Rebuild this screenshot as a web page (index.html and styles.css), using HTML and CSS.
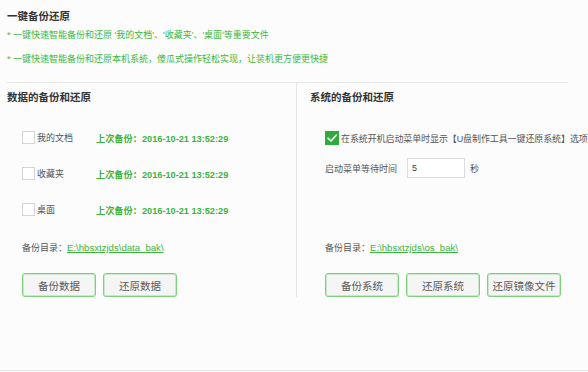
FILE: index.html
```html
<!DOCTYPE html>
<html lang="zh-CN">
<head>
<meta charset="utf-8">
<title>一键备份还原</title>
<link rel="stylesheet" href="styles.css">
</head>
<body>
<div class="page">
  <div class="wrap">
    <h1 class="title">一键备份还原</h1>
    <p class="tip tip1">* 一键快速智能备份和还原 '我的文档'、'收藏夹'、'桌面'等重要文件</p>
    <p class="tip tip2">* 一键快速智能备份和还原本机系统，傻瓜式操作轻松实现，让装机更方便更快捷</p>
    <div class="panels">
      <section class="panel panel-left">
        <h2 class="sub">数据的备份和还原</h2>
        <div class="rows">
          <div class="row"><span class="item"><span class="cb"></span><span class="lbl">我的文档</span></span><span class="date">上次备份：2016-10-21 13:52:29</span></div>
          <div class="row"><span class="item"><span class="cb"></span><span class="lbl">收藏夹</span></span><span class="date">上次备份：2016-10-21 13:52:29</span></div>
          <div class="row"><span class="item"><span class="cb"></span><span class="lbl">桌面</span></span><span class="date">上次备份：2016-10-21 13:52:29</span></div>
        </div>
        <div class="path path-left">备份目录：<a class="link">E:\hbsxtzjds\data_bak\</a></div>
        <div class="btns">
          <button class="btn">备份数据</button>
          <button class="btn">还原数据</button>
        </div>
      </section>
      <section class="panel panel-right">
        <h2 class="sub">系统的备份和还原</h2>
        <div class="opt"><span class="cb cb-on"><svg viewBox="0 0 14 14" width="14" height="14"><path d="M3 7.2 L6 10 L11.2 4.2" fill="none" stroke="#fff" stroke-width="1.6" stroke-linecap="round" stroke-linejoin="round"/></svg></span><span class="opt-text">在系统开机启动菜单时显示【U盘制作工具一键还原系统】选项</span></div>
        <div class="wait"><span>启动菜单等待时间</span><span class="input">5</span><span>秒</span></div>
        <div class="path path-right">备份目录：<a class="link">E:\hbsxtzjds\os_bak\</a></div>
        <div class="btns">
          <button class="btn">备份系统</button>
          <button class="btn">还原系统</button>
          <button class="btn">还原镜像文件</button>
        </div>
      </section>
    </div>
  </div>
</div>
</body>
</html>
```
FILE: styles.css
```css
* { box-sizing: border-box; }
html, body { margin: 0; padding: 0; }
body {
  background: #fcfcfc;
  font-family: "Liberation Sans", "Noto Sans CJK SC", sans-serif;
  color: #555;
  font-size: 9px;
}
.page {
  height: 371px;
  border-bottom: 1px solid #e6e6e6;
  overflow: hidden;
}
.wrap {
  padding-left: 7px;
  width: 568px;
}
.title {
  margin: 9px 0 0;
  font-size: 10.5px;
  line-height: 14px;
  font-weight: bold;
  color: #333;
}
.tip {
  margin: 0;
  line-height: 14px;
  color: #3cb83c;
  white-space: nowrap;
}
.tip1 { margin-top: 5px; }
.tip2 { margin-top: 10px; }
.panels {
  margin-top: 16px;
  border-top: 1px solid #e6e6e6;
  display: grid;
  grid-template-columns: 290px 271px;
  height: 210px;
}
.panel-left {
  border-right: 1px solid #e6e6e6;
}
.panel-right {
  padding-left: 13px;
}
.sub {
  margin: 7px 0 0;
  font-size: 10.5px;
  line-height: 14px;
  font-weight: bold;
  color: #333;
}
.rows {
  margin-top: 15.5px;
  padding-left: 15px;
}
.row {
  height: 36px;
  display: flex;
  align-items: center;
}
.item {
  width: 74px;
  display: flex;
  align-items: center;
}
.cb {
  width: 13px;
  height: 13px;
  border: 1px solid #d4d4d4;
  background: #fff;
  display: inline-block;
  flex: none;
}
.lbl { margin-left: 2px; color: #555; }
.date {
  color: #3cb43c;
  font-weight: bold;
  font-size: 9.2px;
}
.path {
  line-height: 14px;
  white-space: nowrap;
  color: #555;
}
.path-left { margin-top: 13.5px; padding-left: 15px; }
.path-right { margin-top: 63px; padding-left: 15px; }
.link {
  color: #3cb43c;
  text-decoration: underline;
  font-size: 9.6px;
}
.btns {
  margin-top: 18px;
  padding-left: 15px;
  display: flex;
  gap: 7px;
}
.btn {
  width: 74px;
  height: 24px;
  border: 1px solid #7ecf7e;
  border-radius: 3px;
  background: #f5f5f5;
  color: #5a5a5a;
  font-family: "Liberation Sans", "Noto Sans CJK SC", sans-serif;
  font-size: 10.5px;
  padding: 0;
  box-shadow: inset 0 0 0 1px #c9eac9;
}
.opt {
  margin-top: 24px;
  padding-left: 15px;
  height: 20px;
  display: flex;
  align-items: center;
  white-space: nowrap;
}
.cb-on {
  width: 14px;
  height: 14px;
  border: none;
  background: #2eab3c;
}
.cb-on svg { display: block; }
.opt-text { margin-left: 2px; color: #555; letter-spacing: -0.1px; }
.wait {
  margin-top: 10px;
  padding-left: 15px;
  height: 20px;
  display: flex;
  align-items: center;
}
.input {
  width: 58px;
  height: 20px;
  margin: 0 5px 0 10px;
  border: 1px solid #dcdcdc;
  background: #fff;
  padding-left: 4px;
  line-height: 18px;
  color: #444;
}
```
